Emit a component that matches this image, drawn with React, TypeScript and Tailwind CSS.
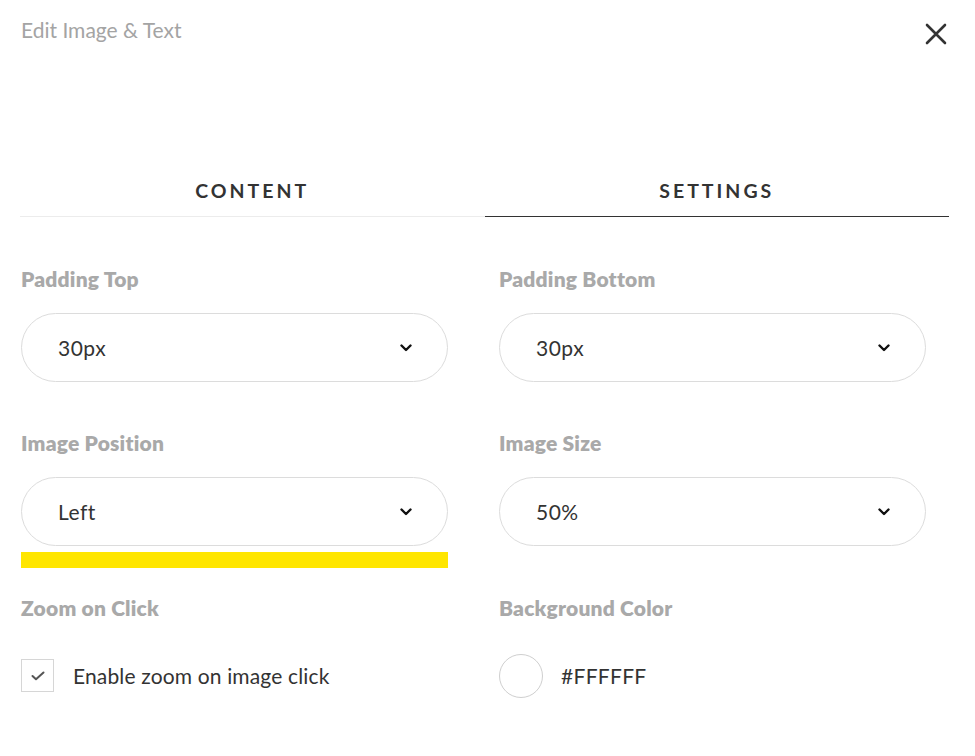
import React from "react";

function Chevron() {
  return (
    <svg width="12" height="8" viewBox="0 0 12 8" fill="none">
      <path d="M1.5 1.5 L6 6 L10.5 1.5" stroke="#111" strokeWidth="2.4" strokeLinecap="round" strokeLinejoin="round" />
    </svg>
  );
}

function Select({ value }: { value: string }) {
  return (
    <div className="flex items-center justify-between w-[427px] h-[69px] rounded-full border border-[#dcdcdc] bg-white pl-[36px] pr-[35px]">
      <span className="text-[21px] text-[#333] tracking-[0.5px]">{value}</span>
      <Chevron />
    </div>
  );
}

function Label({ children }: { children: React.ReactNode }) {
  return <div className="text-[21px] font-extrabold text-[#a9a9a9] leading-[24px] tracking-[0.2px]">{children}</div>;
}

export default function App() {
  return (
    <div className="w-[975px] h-[756px] bg-white relative" style={{ fontFamily: "Lato, 'Open Sans', sans-serif" }}>
      <div className="flex items-start justify-between pl-[21px] pr-[28px] pt-[17px]">
        <div className="text-[21px] text-[#a4a4a4] leading-[26px]">Edit Image &amp; Text</div>
        <svg width="22" height="22" viewBox="0 0 22 22" className="mt-[6px]">
          <path d="M2 2 L20 20 M20 2 L2 20" stroke="#333" strokeWidth="2.6" strokeLinecap="round" />
        </svg>
      </div>

      <div className="flex mx-[20px] mt-[134px] w-[929px]">
        <div className="flex-1 flex justify-center pb-[13px] border-b border-[#ececec]">
          <span className="text-[19.5px] font-bold tracking-[3px] text-[#333] leading-[24px]">CONTENT</span>
        </div>
        <div className="flex-1 flex justify-center pb-[13px] border-b-[1.5px] border-[#333]">
          <span className="text-[19.5px] font-bold tracking-[3px] text-[#333] leading-[24px]">SETTINGS</span>
        </div>
      </div>

      <div className="grid grid-cols-[478px_1fr] pl-[21px] mt-[50px]">
        <div className="flex flex-col">
          <Label>Padding Top</Label>
          <div className="mt-[22px]"><Select value="30px" /></div>
        </div>
        <div className="flex flex-col">
          <Label>Padding Bottom</Label>
          <div className="mt-[22px]"><Select value="30px" /></div>
        </div>

        <div className="flex flex-col mt-[49px]">
          <Label>Image Position</Label>
          <div className="mt-[22px]"><Select value="Left" /></div>
          <div className="mt-[6px] w-[427px] h-[16px] bg-[#ffe600]" />
        </div>
        <div className="flex flex-col mt-[49px]">
          <Label>Image Size</Label>
          <div className="mt-[22px]"><Select value="50%" /></div>
        </div>

        <div className="flex flex-col mt-[28px]">
          <Label>Zoom on Click</Label>
          <div className="flex items-center mt-[39px]">
            <div className="w-[33px] h-[33px] border border-[#d6d6d6] flex items-center justify-center">
              <svg width="14" height="10" viewBox="0 0 14 10" fill="none">
                <path d="M1.5 5 L5 8.3 L12.5 1.5" stroke="#555" strokeWidth="2" strokeLinecap="round" strokeLinejoin="round" />
              </svg>
            </div>
            <span className="ml-[19px] text-[21px] text-[#333] tracking-[0.15px]">Enable zoom on image click</span>
          </div>
        </div>
        <div className="flex flex-col mt-[28px]">
          <Label>Background Color</Label>
          <div className="flex items-center mt-[34px]">
            <div className="w-[44px] h-[44px] rounded-full border border-[#cfcfcf] bg-white" />
            <span className="ml-[18px] text-[21px] text-[#333] tracking-[0.3px]">#FFFFFF</span>
          </div>
        </div>
      </div>
    </div>
  );
}
